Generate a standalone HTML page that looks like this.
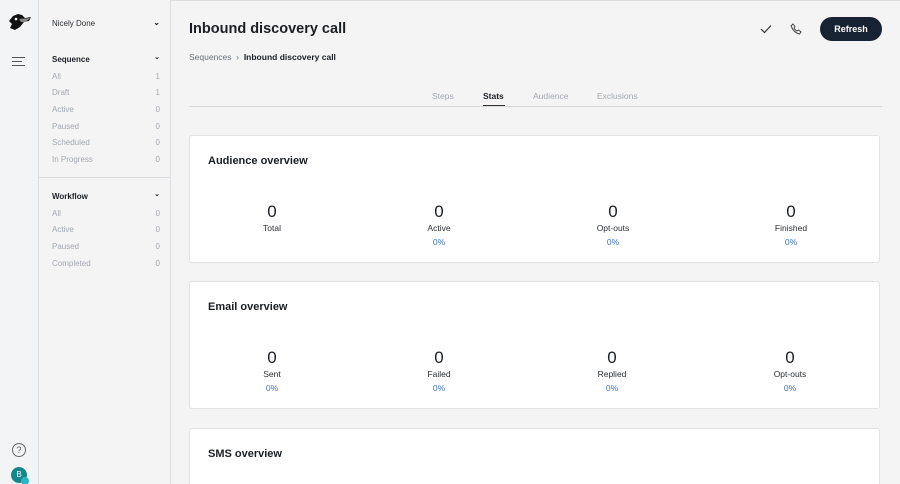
<!DOCTYPE html>
<html style="width:900px;height:484px;overflow:hidden"><head><style>
*{margin:0;padding:0;box-sizing:border-box}
body{width:900px;height:484px;overflow:hidden;background:#f4f4f4;font-family:"Liberation Sans",sans-serif;position:relative;color:#1b1f24}
.rail{position:absolute;left:0;top:0;width:39px;height:484px;background:#f3f4f5;border-right:1px solid #dcdde0}
.side{position:absolute;left:39px;top:0;width:132px;height:484px;background:#f4f4f4;border-right:1px solid #dcdde0}
.side .t{position:absolute;left:13px;font-size:8px;font-weight:bold;color:#1b1f24}
.side .i{position:absolute;left:13px;font-size:8px;color:#a3a8b0}
.side .n{position:absolute;right:10px;font-size:8px;color:#a3a8b0}
.side .c{position:absolute;right:10px;font-size:7px;color:#1b1f24}
.sep{position:absolute;left:0;width:131px;height:1px;background:#dcdde0}
.abs{position:absolute}
.card{position:absolute;left:189px;width:691px;background:#fff;border:1px solid #e1e2e4;border-radius:3px}
.card h2{position:absolute;left:18px;top:19px;font-size:11px;font-weight:bold}
.st{position:absolute;width:100px;text-align:center}
.st .v{font-size:17px;line-height:18px}
.st .l{font-size:8.5px;margin-top:2px;color:#2a2e33}
.st .p{font-size:8.5px;margin-top:4px;color:#3f74c2}
.tab{position:absolute;top:91px;font-size:8.5px;color:#a3a8b0}
</style></head><body>
<div class="rail">
<svg class="abs" style="left:7px;top:12px" width="26" height="21" viewBox="0 0 26 21"><path d="M2 9 L6 4 L11 2 L15 3 L18 6 L24 5 L22 9 L17 10 L13 15 L8 18 L3 16 L5 12 Z" fill="#111"/><path d="M12 7 L23 6 L19 10 L14 10 Z" fill="#888"/><circle cx="9" cy="7" r="1.3" fill="#fff"/></svg>
<div class="abs" style="left:12px;top:57px;width:13px;height:1.3px;background:#555"></div>
<div class="abs" style="left:12px;top:61px;width:10px;height:1.3px;background:#555"></div>
<div class="abs" style="left:12px;top:65px;width:13px;height:1.3px;background:#555"></div>
<div class="abs" style="left:12px;top:443px;width:14px;height:14px;border:1.3px solid #666;border-radius:50%;font-size:9px;text-align:center;line-height:12px;color:#555">?</div>
<div class="abs" style="left:11px;top:467px;width:16px;height:16px;border-radius:50%;background:#14878c;color:#fff;font-size:8px;text-align:center;line-height:16px">B</div>
<div class="abs" style="left:21px;top:477px;width:8px;height:8px;border-radius:50%;background:#2ab6c4"></div>
</div>
<div class="side">
<div class="c" style="top:18px;font-weight:bold;font-size:8px">⌄</div>
<div class="i" style="top:19px;color:#2a2e33">Nicely Done</div>
<div class="t" style="top:55px">Sequence</div><div class="c" style="top:53px;font-weight:bold">⌄</div>
<div class="i" style="top:72px">All</div><div class="n" style="top:72px">1</div>
<div class="i" style="top:88px">Draft</div><div class="n" style="top:88px">1</div>
<div class="i" style="top:105px">Active</div><div class="n" style="top:105px">0</div>
<div class="i" style="top:122px">Paused</div><div class="n" style="top:122px">0</div>
<div class="i" style="top:138px">Scheduled</div><div class="n" style="top:138px">0</div>
<div class="i" style="top:155px">In Progress</div><div class="n" style="top:155px">0</div>
<div class="sep" style="top:177px"></div>
<div class="t" style="top:192px">Workflow</div><div class="c" style="top:190px;font-weight:bold">⌄</div>
<div class="i" style="top:209px">All</div><div class="n" style="top:209px">0</div>
<div class="i" style="top:225px">Active</div><div class="n" style="top:225px">0</div>
<div class="i" style="top:242px">Paused</div><div class="n" style="top:242px">0</div>
<div class="i" style="top:259px">Completed</div><div class="n" style="top:259px">0</div>
</div>
<div class="abs" style="left:171px;top:0;width:729px;height:1px;background:#dcdde0"></div>
<div class="abs" style="left:189px;top:21px;font-size:14.5px;font-weight:bold">Inbound discovery call</div>
<div class="abs" style="left:189px;top:52px;font-size:8.5px;color:#6b7078">Sequences &nbsp;›&nbsp; <b style="color:#1b1f24">Inbound discovery call</b></div>
<svg class="abs" style="left:760px;top:24px" width="12" height="10" viewBox="0 0 12 10"><path d="M1 5 L4.5 8.5 L11 1.5" stroke="#333" stroke-width="1.2" fill="none"/></svg>
<svg class="abs" style="left:790px;top:23px" width="12" height="12" viewBox="0 0 12 12"><path d="M3 1 L5 3.5 L4 5 Q5.5 7.5 7 8 L8.5 7 L11 9 L9.5 11 Q4 10 1 3 Z" stroke="#444" stroke-width="1" fill="none"/></svg>
<div class="abs" style="left:820px;top:17px;width:62px;height:24px;border-radius:12px;background:#172333;color:#fff;font-size:9px;font-weight:bold;text-align:center;line-height:24px">Refresh</div>
<div class="tab" style="left:432px">Steps</div>
<div class="tab" style="left:483px;color:#1b1f24;font-weight:bold">Stats</div>
<div class="abs" style="left:483px;top:105px;width:22px;height:2px;background:#333"></div>
<div class="tab" style="left:533px">Audience</div>
<div class="tab" style="left:597px">Exclusions</div>
<div class="abs" style="left:189px;top:106px;width:693px;height:1px;background:#d8d9dc"></div>

<div class="card" style="top:135px;height:128px"><h2>Audience overview</h2>
<div class="st" style="left:32px;top:67px"><div class="v">0</div><div class="l">Total</div></div>
<div class="st" style="left:199px;top:67px"><div class="v">0</div><div class="l">Active</div><div class="p">0%</div></div>
<div class="st" style="left:373px;top:67px"><div class="v">0</div><div class="l">Opt-outs</div><div class="p">0%</div></div>
<div class="st" style="left:551px;top:67px"><div class="v">0</div><div class="l">Finished</div><div class="p">0%</div></div>
</div>
<div class="card" style="top:281px;height:128px"><h2>Email overview</h2>
<div class="st" style="left:32px;top:67px"><div class="v">0</div><div class="l">Sent</div><div class="p">0%</div></div>
<div class="st" style="left:199px;top:67px"><div class="v">0</div><div class="l">Failed</div><div class="p">0%</div></div>
<div class="st" style="left:372px;top:67px"><div class="v">0</div><div class="l">Replied</div><div class="p">0%</div></div>
<div class="st" style="left:550px;top:67px"><div class="v">0</div><div class="l">Opt-outs</div><div class="p">0%</div></div>
</div>
<div class="card" style="top:428px;height:56px;border-bottom:none;border-radius:3px 3px 0 0"><h2>SMS overview</h2></div>
</body></html>
